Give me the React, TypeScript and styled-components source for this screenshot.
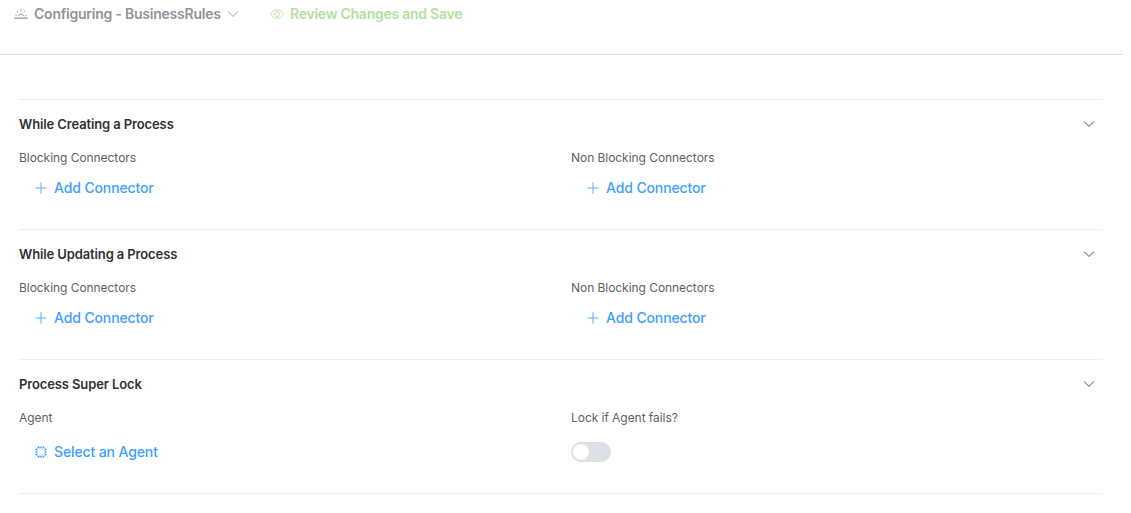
import React from 'react';
import styled, { createGlobalStyle } from 'styled-components';

const IconSunrise: React.FC = () => (
  <Icon $size={14} viewBox="0 0 14 14">
    <path d="M.3 11.1h13.4" strokeWidth="1.2" />
    <path d="M3.8 9.5a3.4 3.4 0 0 1 6.4 0M7 2.2v2M3 3.9l1.1 1.4M11 3.9L9.9 5.3M1.2 8l1.5.5M12.8 8l-1.5.5" />
  </Icon>
);

const IconArrow: React.FC = () => (
  <Icon $size={14} viewBox="0 0 14 14">
    <path d="M2.1 4.6L7 9.4l4.9-4.8" />
  </Icon>
);

const IconView: React.FC = () => (
  <Icon $size={14} viewBox="0 0 14 14">
    <path d="M.5 7C2 4.2 4.3 2.7 7 2.7S12 4.2 13.5 7C12 9.8 9.7 11.3 7 11.3S2 9.8.5 7z" />
    <circle cx="7" cy="7" r="2.6" />
  </Icon>
);

const IconPlus: React.FC = () => (
  <Icon $size={14} viewBox="0 0 14 14">
    <path d="M7 1.4v11.2M1.4 7h11.2" />
  </Icon>
);

const IconCpu: React.FC = () => (
  <Icon $size={14} viewBox="0 0 14 14">
    <rect x="2.8" y="2.8" width="8.4" height="8.4" rx="1" />
    <path d="M4.5 2.8V.9M7 2.8V.9M9.5 2.8V.9M4.5 13.1v-1.9M7 13.1v-1.9M9.5 13.1v-1.9M2.8 4.5H.9M2.8 7H.9M2.8 9.5H.9M13.1 4.5h-1.9M13.1 7h-1.9M13.1 9.5h-1.9" />
  </Icon>
);

const Connectors: React.FC<ConnectorsProps> = ({ label }) => (
  <Column>
    <Label>{label}</Label>
    <LinkButton>
      <IconPlus />
      <LinkText>Add Connector</LinkText>
    </LinkButton>
  </Column>
);

const Section: React.FC<SectionProps> = ({ title, height, children }) => (
  <Panel $height={height}>
    <PanelHeader>
      <PanelTitle>{title}</PanelTitle>
      <IconArrow />
    </PanelHeader>
    <Columns>{children}</Columns>
  </Panel>
);

const App: React.FC = () => (
  <>
    <GlobalStyle />
    <Toolbar>
      <ToolbarItem $color="#909399">
        <IconSunrise />
        <ToolbarText $width={187} $spacing={-0.23}>Configuring - BusinessRules</ToolbarText>
        <IconArrow />
      </ToolbarItem>
      <ToolbarItem $color="#b3e19d">
        <IconView />
        <ToolbarText $width={173} $spacing={-0.25}>Review Changes and Save</ToolbarText>
      </ToolbarItem>
    </Toolbar>

    <Content>
      <Section title="While Creating a Process" height={130}>
        <Connectors label="Blocking Connectors" />
        <Connectors label="Non Blocking Connectors" />
      </Section>
      <Section title="While Updating a Process" height={130}>
        <Connectors label="Blocking Connectors" />
        <Connectors label="Non Blocking Connectors" />
      </Section>
      <Section title="Process Super Lock" height={134}>
        <Column>
          <Label>Agent</Label>
          <LinkButton $tall>
            <IconCpu />
            <LinkText>Select an Agent</LinkText>
          </LinkButton>
        </Column>
        <Column>
          <Label>Lock if Agent fails?</Label>
          <Switch role="switch" aria-checked="false" aria-label="Lock if Agent fails?">
            <Knob />
          </Switch>
        </Column>
      </Section>
    </Content>
  </>
);

const GlobalStyle = createGlobalStyle`
  * {
    box-sizing: border-box;
  }

  body {
    margin: 0;
    overflow: hidden;
    background-color: #fff;
    color: #303133;
    font-family: Inter, "Liberation Sans", sans-serif;
  }
`;

const Icon = styled.svg<{ $size: number }>`
  flex: none;
  width: ${(props) => props.$size}px;
  height: ${(props) => props.$size}px;

  fill: none;
  stroke: currentColor;
  stroke-width: 0.85;
`;

const Toolbar = styled.header`
  display: flex;
  align-items: flex-start;
  gap: 30px;
  width: 1123px;
  height: 55px;
  padding-left: 14px;

  border-bottom: 1px solid #dcdfe6;
`;

const ToolbarItem = styled.div<{ $color: string }>`
  display: flex;
  align-items: center;
  gap: 5px;
  height: 28px;

  color: ${(props) => props.$color};
`;

const ToolbarText = styled.span<{ $width: number; $spacing: number }>`
  width: ${(props) => props.$width}px;
  margin-left: 1px;
  padding-bottom: 2px;

  font-size: 14px;
  font-weight: 600;
  letter-spacing: ${(props) => props.$spacing}px;
  white-space: nowrap;
`;

const Content = styled.main`
  width: 1103px;
  padding: 44px 0 0 19px;
`;

const Panel = styled.section<{ $height: number }>`
  height: ${(props) => props.$height}px;

  border-top: 1px solid #ebeef5;

  &:last-child {
    height: ${(props) => props.$height + 1}px;
    border-bottom: 1px solid #ebeef5;
  }
`;

const PanelHeader = styled.div`
  display: flex;
  align-items: center;
  justify-content: space-between;
  height: 48px;
  padding-right: 7.5px;
`;

const PanelTitle = styled.h2`
  margin: 0;

  font-size: 13px;
  font-weight: 600;
  line-height: 16px;
  letter-spacing: -0.12px;
`;

const Columns = styled.div`
  display: grid;
  grid-template-columns: 1fr 1fr;
  gap: 20px;
`;

const Column = styled.div`
  display: flex;
  flex-direction: column;
  align-items: flex-start;
`;

const Label = styled.div`
  height: 20px;

  color: #606266;
  font-size: 12px;
  line-height: 20px;
  letter-spacing: -0.05px;
`;

const LinkButton = styled.button<{ $tall?: boolean }>`
  display: flex;
  align-items: center;
  gap: 6px;
  height: ${(props) => (props.$tall ? 48 : 40)}px;
  padding: 0 15px;

  border: none;
  background: none;
  color: #409eff;
  font: inherit;
`;

const LinkText = styled.span`
  padding-bottom: 2px;

  font-size: 14px;
  font-weight: 500;
  letter-spacing: -0.12px;
  white-space: nowrap;
`;

const Switch = styled.div`
  width: 40px;
  height: 20px;
  margin-top: 14px;
  padding: 2px;

  border-radius: 10px;
  background-color: #dcdfe6;
`;

const Knob = styled.div`
  width: 16px;
  height: 16px;

  border-radius: 50%;
  background-color: #fff;
`;

interface ConnectorsProps {
  label: string;
}

interface SectionProps {
  title: string;
  height: number;
  children: React.ReactNode;
}

export default App;
